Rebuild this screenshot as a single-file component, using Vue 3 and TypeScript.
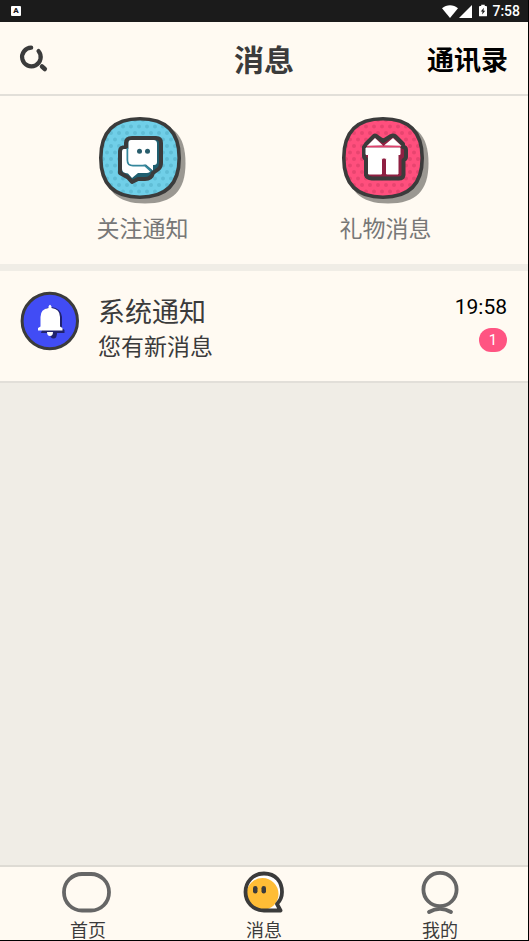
<script setup lang="ts">
interface Shortcut {
  id: 'follow' | 'gift'
  label: string
  fill: string
  dot: string
}

interface Notice {
  id: number
  title: string
  summary: string
  time: string
  unread: number
}

interface Tab {
  id: 'home' | 'message' | 'mine'
  label: string
}

const shortcuts: Shortcut[] = [
  { id: 'follow', label: '关注通知', fill: '#70cfe8', dot: '#60bdd6' },
  { id: 'gift', label: '礼物消息', fill: '#ff4f7d', dot: '#e8446f' },
]

const notices: Notice[] = [
  { id: 1, title: '系统通知', summary: '您有新消息', time: '19:58', unread: 1 },
]

const tabs: Tab[] = [
  { id: 'home', label: '首页' },
  { id: 'message', label: '消息' },
  { id: 'mine', label: '我的' },
]
const activeTab: Tab['id'] = 'message'
</script>

<template>
  <div class="screen">
    <div class="status">
      <span class="ime">A</span>
      <div class="system">
        <svg width="16" height="13" viewBox="0 0 16 13" aria-hidden="true">
          <path d="M0 3.2C4.5-.7 11.500-.7 16 3.200L8 13Z" fill="#fff" />
        </svg>
        <svg width="13" height="13" viewBox="0 0 13 13" aria-hidden="true">
          <path d="M13 0V13H0Z" fill="#fff" />
        </svg>
        <svg class="battery" width="8" height="13" viewBox="0 0 9 13" aria-hidden="true">
          <path d="M2.500 0h4v1.500H8a1 1 0 0 1 1 1V12a1 1 0 0 1-1 1H1a1 1 0 0 1-1-1V2.500a1 1 0 0 1 1-1h1.500Z" fill="#fff" />
          <path d="M5.500 3.500 2 7.500h2l-.5 3.500L7 6.800H5Z" fill="#1b1b1b" />
        </svg>
        <span class="clock">7:58</span>
      </div>
    </div>

    <header class="header">
      <button class="search" type="button" aria-label="搜索">
        <svg width="30" height="28" viewBox="0 0 30 28" aria-hidden="true">
          <g fill="none" stroke="#3b3b3b" stroke-width="4.200" stroke-linecap="round">
            <path d="M11.200 3.700A9.300 9.300 0 1 0 18.500 7" />
            <path d="M22 22.500 24.800 25" stroke-width="4.500" />
          </g>
        </svg>
      </button>
      <h1 class="title">消息</h1>
      <button class="contacts" type="button">通讯录</button>
    </header>

    <section class="shortcuts">
      <button v-for="item in shortcuts" :key="item.id" class="shortcut" type="button">
        <svg width="87" height="87" viewBox="0 0 87 87" aria-hidden="true">
          <defs>
            <pattern :id="`dots-${item.id}`" width="8" height="13" patternUnits="userSpaceOnUse">
              <circle cx="4" cy="3" r="2" :fill="item.dot" />
              <circle cx="0" cy="9.500" r="2" :fill="item.dot" />
              <circle cx="8" cy="9.500" r="2" :fill="item.dot" />
            </pattern>
          </defs>
          <path d="M46 5C74 5 86.500 18 86.500 46S74 86.500 46 86.500 5 74 5 46 18 5 46 5Z" fill="#9b9892" />
          <path d="M41 1.800C67 1.800 80.200 15 80.200 41S67 80.200 41 80.200 1.800 67 1.800 41 15 1.800 41 1.800Z" :fill="item.fill" />
          <path d="M41 1.800C67 1.800 80.200 15 80.200 41S67 80.200 41 80.200 1.800 67 1.800 41 15 1.800 41 1.800Z" :fill="`url(#dots-${item.id})`" stroke="#3b3b3b" stroke-width="3.600" />
          <g v-if="item.id === 'follow'">
            <path d="M33 21H57Q62 21 62 26V46Q62 50 59.500 52L54 56Q52.500 62 46 62H39L33 65 29 60.500 21 56V34Q21 30 27 30V26Q27 21 33 21Z" fill="#1f5f70" stroke="#3b3b3b" stroke-width="4" stroke-linejoin="round" />
            <path d="M25 32H40L44 47 51.500 54Q50.500 56 48 56H39L33 61 29 56.500Q23 56 23 52V35Q23 32 25 32Z" fill="#fff" />
            <path d="M28.500 31V43Q28.500 48.500 34 48.500H46L52 54" fill="none" stroke="#35879c" stroke-width="2" />
            <path d="M32 23H54.500Q58 23 58 26.500V45Q58 48 55 48H54V53.500L47 47.500H33Q29.500 47.500 29.500 44V26Q29.500 23 32 23Z" fill="#fff" />
            <circle cx="40.500" cy="34.200" r="2.500" fill="#285d6c" />
            <circle cx="48.500" cy="34.200" r="2.500" fill="#285d6c" />
          </g>
          <g v-else>
            <path d="M32 19Q33 18 34 19L41 24 49 19Q51 18 53 19L61 27V30Q64 30 64 33V40Q64 42 61.500 43V58Q61 61.500 57 61.500H30Q25 61 24 58V42Q22 41 22 39V30L24 27Z" fill="#8f2042" stroke="#3b3b3b" stroke-width="4" stroke-linejoin="round" />
            <path d="M25 29 33 21 41 28.500ZM42 28.500 51 21 59.500 29Z" fill="#fff" />
            <path d="M25 29.500H59" stroke="#e33f6c" stroke-width="1.500" />
            <path d="M24 31H58V37.500H56V57H44.500V43Q44.500 41 43 41H41Q39.500 41 39.500 43V57H26.500V37.500H24Z" fill="#fff" stroke="#fff" stroke-linejoin="round" />
          </g>
        </svg>
        <span>{{ item.label }}</span>
      </button>
    </section>

    <main class="list">
      <a v-for="notice in notices" :key="notice.id" class="notice" href="#notice">
        <svg class="avatar" width="60" height="60" viewBox="0 0 60 60" aria-hidden="true">
          <circle cx="29.800" cy="30" r="27.700" fill="#414cf5" stroke="#3b3b3b" stroke-width="3" />
          <g fill="#20226f">
            <path d="M22 39V25Q22 17 31 16Q41 17 42 26V37L44.500 39V42H21Z" />
            <path d="M30 42H37Q37 47.500 33.500 47.500T30 42Z" />
          </g>
          <g fill="#fff">
            <path d="M28.500 15.500Q30 12 31.500 15.500V17Q40 18 40 26V35.500L42.500 37V39.500H18V37L20.500 35.500V26Q20.500 18 28.500 17Z" />
            <path d="M27 41H33Q33 45 30 45T27 41Z" />
          </g>
        </svg>
        <div class="body">
          <strong class="name">{{ notice.title }}</strong>
          <span class="summary">{{ notice.summary }}</span>
        </div>
        <div class="meta">
          <time class="time">{{ notice.time }}</time>
          <span class="badge">{{ notice.unread }}</span>
        </div>
      </a>
    </main>

    <nav class="tabs">
      <a
        v-for="tab in tabs"
        :key="tab.id"
        class="tab"
        :href="`#${tab.id}`"
        :aria-current="tab.id === activeTab ? 'page' : undefined"
      >
        <svg v-if="tab.id === 'home'" width="50" height="46" viewBox="0 0 50 46" aria-hidden="true">
          <rect x="1" y="6" width="45" height="36.500" rx="18" fill="none" stroke="#666" stroke-width="3.800" />
        </svg>
        <svg v-else-if="tab.id === 'message'" width="50" height="46" viewBox="0 0 50 46" aria-hidden="true">
          <path d="M25 5.500C37 5.500 43 14 43 24Q43 31 38 36L41 42.500H25C14 42.500 6 34 6 24S14 5.500 25 5.500Z" fill="#fff" />
          <circle cx="23.500" cy="26" r="16" fill="#ffbd36" />
          <path d="M25 5.500C37 5.500 43 14 43 24Q43 31 38 36L41.500 42.500H25C14 42.500 6.500 34 6.500 24S14 5.500 25 5.500Z" fill="none" stroke="#3b3b3b" stroke-width="3.800" stroke-linejoin="round" />
          <rect x="14" y="18" width="4.500" height="7.500" rx="2.200" fill="#3b3b3b" />
          <rect x="22.500" y="18" width="4.500" height="7.500" rx="2.200" fill="#3b3b3b" />
        </svg>
        <svg v-else width="50" height="46" viewBox="0 0 50 46" aria-hidden="true">
          <g fill="none" stroke="#666" stroke-width="3.800" stroke-linecap="round">
            <circle cx="25" cy="21.500" r="16.600" />
            <path d="M14 44Q25 37.500 36 44" />
          </g>
        </svg>
        <span>{{ tab.label }}</span>
      </a>
    </nav>
  </div>
</template>

<style>
body {
  margin: 0;
  background: #000;
}
</style>

<style scoped>
.screen {
  box-sizing: border-box;
  display: flex;
  flex-direction: column;
  height: 100vh;
  overflow: hidden;
  border-right: 1px solid #000;
  border-bottom: 1px solid #000;
  background: #f0ede6;
  color: #3b3b3b;
  font-family: Roboto, 'Noto Sans CJK SC', sans-serif;
}

button {
  padding: 0;
  border: 0;
  background: none;
  color: inherit;
  font: inherit;
}

a {
  color: inherit;
  text-decoration: none;
}

svg {
  display: block;
  overflow: visible;
}

.status {
  display: flex;
  flex: none;
  align-items: center;
  justify-content: space-between;
  height: 22px;
  padding: 0 8px 0 11px;
  background: #1b1b1b;
  color: #fff;
}

.ime {
  width: 10px;
  border-radius: 1px;
  background: #fff;
  color: #1b1b1b;
  font-size: 8px;
  font-weight: 900;
  line-height: 10px;
  text-align: center;
}

.system {
  display: flex;
  align-items: center;
  gap: 1px;
}

.battery {
  margin: 0 4px 2px 6px;
}

.clock {
  font-size: 14px;
  font-weight: 500;
  line-height: 22px;
}

.header {
  display: grid;
  flex: none;
  grid-template-columns: 1fr auto 1fr;
  align-items: center;
  height: 72px;
  padding: 0 20px;
  border-bottom: 2px solid #e2dfd9;
  background: #fffaf2;
}

.search {
  justify-self: start;
}

.title {
  margin: 0;
  padding-top: 6px;
  font-size: 30px;
  font-weight: 700;
  line-height: 40px;
}

.contacts {
  justify-self: end;
  padding-top: 6px;
  color: #000;
  font-size: 27px;
  font-weight: 700;
  line-height: 40px;
}

.shortcuts {
  display: grid;
  flex: none;
  grid-template-columns: 1fr 1fr;
  padding: 21px 21px 18px;
  background: #fffaf2;
}

.shortcut {
  display: flex;
  flex-direction: column;
  align-items: center;
  gap: 10px;
  color: #777;
  font-size: 23px;
  line-height: 32px;
}

.list {
  flex: 1;
  padding-top: 7px;
}

.notice {
  display: flex;
  padding: 20px 21px 18px 20px;
  border-bottom: 2px solid #e2dfd9;
  background: #fffaf2;
}

.body {
  display: flex;
  flex: 1;
  flex-direction: column;
  padding-top: 2px;
  margin-left: 18px;
}

.name {
  font-size: 27px;
  font-weight: 400;
  line-height: 40px;
}

.summary {
  font-size: 23px;
  line-height: 30px;
}

.meta {
  display: flex;
  flex-direction: column;
  align-items: flex-end;
  gap: 5px;
  color: #000;
}

.time {
  font-size: 21px;
  line-height: 32px;
}

.badge {
  min-width: 28px;
  border-radius: 12px;
  background: #ff5482;
  color: #fff;
  font-size: 15px;
  line-height: 24px;
  text-align: center;
}

.tabs {
  display: grid;
  flex: none;
  grid-template-columns: repeat(3, 1fr);
  border-top: 2px solid #dedbd4;
  background: #fffaf2;
}

.tab {
  display: flex;
  flex-direction: column;
  align-items: center;
  gap: 1px;
  box-sizing: border-box;
  height: 73px;
  padding-top: 1px;
  font-size: 18px;
  line-height: 32px;
}
</style>
